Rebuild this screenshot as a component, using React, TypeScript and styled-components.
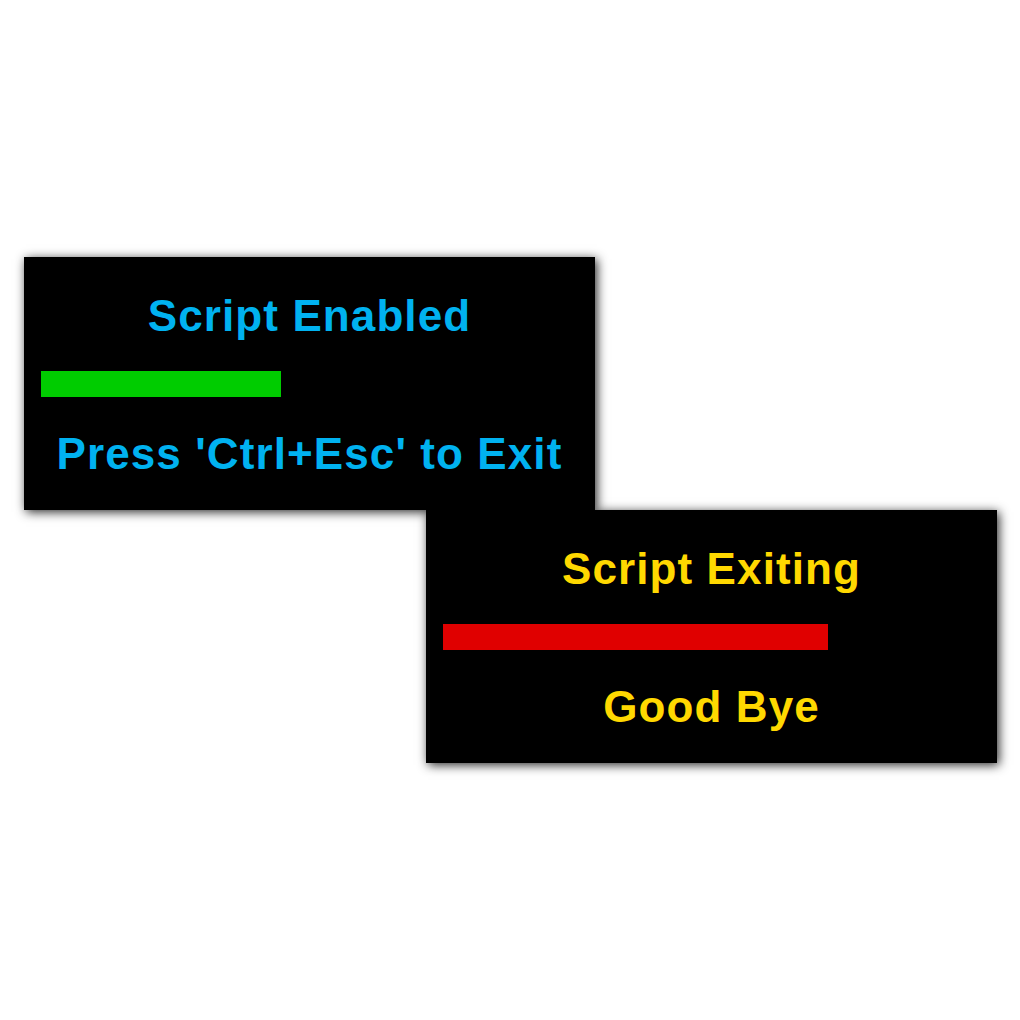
import React from 'react';
import styled, { createGlobalStyle } from 'styled-components';

const GlobalStyle = createGlobalStyle`
   html, body {
      margin: 0;
      padding: 0;
      background: #ffffff;
   }
   body {
      font-family: 'Liberation Sans', Arial, sans-serif;
   }
`;

const StyledDesktop = styled.div`
   width: 1020px;
   height: 1020px;
   padding: 257px 0 0 24px;
   box-sizing: border-box;
   display: flex;
   flex-direction: column;
`;

const StyledToast = styled.div<{ $offset: number }>`
   width: 571px;
   height: 253px;
   margin-left: ${(p) => p.$offset}px;
   padding: 34px 17px 0 17px;
   box-sizing: border-box;
   background: #000000;
   box-shadow: 2px 2px 10px rgba(0, 0, 0, 0.85);
   display: flex;
   flex-direction: column;
`;

const StyledToastText = styled.div<{ $color: string }>`
   height: 50px;
   line-height: 50px;
   font-size: 44px;
   font-weight: bold;
   letter-spacing: 1.1px;
   text-align: center;
   color: ${(p) => p.$color};
   white-space: nowrap;
`;

const StyledProgress = styled.div<{ $color: string }>`
   height: 26px;
   margin: 30px 0 32px 0;
   background: ${(p) => p.$color};
`;

type ToastProps = {
   offset: number;
   title: string;
   message: string;
   textColor: string;
   barColor: string;
   barWidth: number;
};

const Toast: React.FC<ToastProps> = ({ offset, title, message, textColor, barColor, barWidth }) => {
   return (
      <StyledToast $offset={offset}>
         <StyledToastText $color={textColor}>{title}</StyledToastText>
         <StyledProgress $color={barColor} style={{ width: barWidth }} />
         <StyledToastText $color={textColor}>{message}</StyledToastText>
      </StyledToast>
   );
};

export default function App() {
   return (
      <>
         <GlobalStyle />
         <StyledDesktop>
            <Toast
               offset={0}
               title="Script Enabled"
               message="Press 'Ctrl+Esc' to Exit"
               textColor="#00b2f0"
               barColor="#00cc00"
               barWidth={240}
            />
            <Toast
               offset={402}
               title="Script Exiting"
               message="Good Bye"
               textColor="#ffd800"
               barColor="#e00000"
               barWidth={385}
            />
         </StyledDesktop>
      </>
   );
}
